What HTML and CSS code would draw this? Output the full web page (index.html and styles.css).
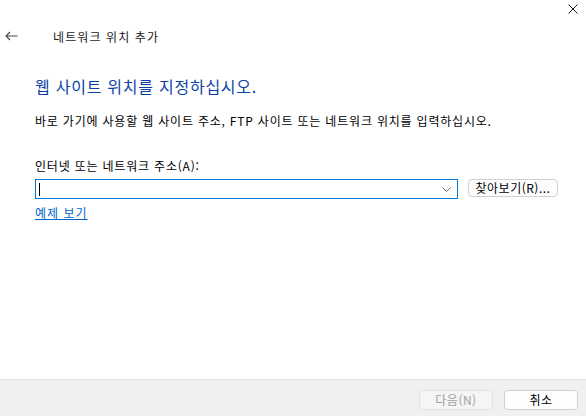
FILE: index.html
```html
<!DOCTYPE html>
<html lang="ko">
<head>
  <meta charset="UTF-8" />
  <meta name="viewport" content="width=device-width, initial-scale=1.0"/>
  <title>네트워크 위치 추가</title>
  <link rel="stylesheet" href="styles.css">
</head>
<body>
  <div class="wizard">
    <div class="titlebar">
      <button class="close" aria-label="닫기">
        <svg width="10" height="10" viewBox="0 0 10 10"><path d="M0.5 0.5 L9.5 9.5 M9.5 0.5 L0.5 9.5" stroke="#1a1a1a" stroke-width="1"/></svg>
      </button>
    </div>
    <div class="nav">
      <button class="back" aria-label="뒤로">
        <svg width="13" height="10" viewBox="0 0 13 10"><path d="M12.5 5 H1 M5 1 L1 5 L5 9" stroke="#444" stroke-width="1.1" fill="none"/></svg>
      </button>
      <span class="nav-title">네트워크 위치 추가</span>
    </div>
    <div class="content">
      <h1>웹 사이트 위치를 지정하십시오.</h1>
      <p class="desc">바로 가기에 사용할 웹 사이트 주소, FTP 사이트 또는 네트워크 위치를 입력하십시오.</p>
      <label class="field-label">인터넷 또는 네트워크 주소(A):</label>
      <div class="field-row">
        <div class="combo">
          <span class="caret"></span>
          <svg class="chevron" width="9" height="5" viewBox="0 0 9 5"><path d="M0.5 0.5 L4.5 4.5 L8.5 0.5" stroke="#666" stroke-width="1" fill="none"/></svg>
        </div>
        <button class="btn browse">찾아보기(R)...</button>
      </div>
      <a class="link" href="#">예제 보기</a>
    </div>
    <div class="footer">
      <button class="btn footer-btn" disabled>다음(N)</button>
      <button class="btn footer-btn">취소</button>
    </div>
  </div>
</body>
</html>
```

FILE: styles.css
```css
body {
  margin: 0;
  font-family: "Noto Sans CJK KR", "Noto Sans", sans-serif;
  font-size: 12px;
  letter-spacing: 0.8px;
  color: #000;
  background: #fff;
}

.wizard {
  width: 586px;
  height: 416px;
  display: flex;
  flex-direction: column;
}

.titlebar {
  height: 22px;
  display: flex;
  justify-content: flex-end;
}

.close {
  width: 30px;
  height: 22px;
  border: none;
  background: none;
  padding: 4px 0 0 4px;
  display: flex;
  align-items: flex-start;
  justify-content: center;
}

.nav {
  height: 28px;
  display: flex;
  align-items: center;
}

.back {
  width: 26px;
  border: none;
  background: none;
  padding: 0 0 0 5px;
  display: flex;
  align-items: center;
}

.nav-title {
  margin-left: 27px;
  font-size: 12px;
  letter-spacing: 1.1px;
  color: #1a1a1a;
}

.content {
  flex: 1;
  padding: 25px 0 0 35px;
}

h1 {
  margin: 0;
  font-size: 16px;
  font-weight: normal;
  letter-spacing: 0.75px;
  color: #0c3fa8;
  line-height: 22px;
}

.desc {
  margin: 15px 0 0;
  line-height: 18px;
}

.field-label {
  display: block;
  margin-top: 27px;
  line-height: 18px;
}

.field-row {
  margin-top: 4px;
  display: flex;
  align-items: flex-start;
  gap: 10px;
}

.combo {
  box-sizing: border-box;
  width: 423px;
  height: 20px;
  border: 1px solid #0078d7;
  display: flex;
  align-items: center;
  justify-content: space-between;
  padding: 0 6px 0 3px;
}

.caret {
  width: 1px;
  height: 13px;
  background: #000;
}

.btn {
  font-family: inherit;
  font-size: 12px;
  letter-spacing: 0.5px;
  border: 1px solid #d0d0d0;
  border-radius: 4px;
  background: #fdfdfd;
  color: #000;
  padding: 0;
}

.browse {
  width: 90px;
  height: 18px;
  line-height: 16px;
}

.link {
  display: inline-block;
  margin-top: 5px;
  color: #0066cc;
  line-height: 18px;
  letter-spacing: 1px;
}

.footer {
  height: 37px;
  background: #f0f0f0;
  border-top: 1px solid #e0e0e0;
  display: flex;
  justify-content: flex-end;
  align-items: flex-start;
  gap: 11px;
  padding: 10px 8px 0 0;
  box-sizing: border-box;
}

.footer-btn {
  width: 74px;
  height: 20px;
  line-height: 18px;
}

.footer-btn:disabled {
  color: #a0a0a0;
  border-color: #e2e2e2;
  background: #f5f5f5;
}
```
